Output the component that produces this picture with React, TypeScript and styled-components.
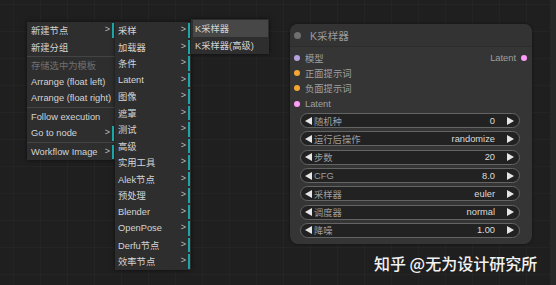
import * as React from 'react';
import styled, {createGlobalStyle} from 'styled-components';

const GlobalStyle = createGlobalStyle`
  html, body {
    margin: 0;
    padding: 0;
    background: #202020;
  }
  body {
    font-family: "Liberation Sans", "Noto Sans CJK SC", sans-serif;
  }
`;

const Canvas = styled.div`
  position: relative;
  width: 556px;
  height: 285px;
  overflow: hidden;
  box-sizing: border-box;
  border-right: 6px solid #282828;
  background-color: #1f1f1f;
  background-image:
    linear-gradient(rgba(255,255,255,.025) 1px, transparent 1px),
    linear-gradient(90deg, rgba(255,255,255,.025) 1px, transparent 1px);
  background-size: 27px 27px;
  background-position: 13px 4px;
`;

// context menu cascade, floats over the canvas
const MenuStack = styled.div`
  position: absolute;
  left: 27px;
  top: 22px;
  display: flex;
  align-items: flex-start;
`;

const Menu = styled.div<{$width: number; $offset?: number}>`
  box-sizing: border-box;
  width: ${p => p.$width}px;
  margin-top: ${p => p.$offset || 0}px;
  padding: ${p => (p.$offset ? '1px 1px 1px 2px' : '0')};
  background: #2e2e2e;
  box-shadow: 0 0 4px rgba(0,0,0,.6);
  display: flex;
  flex-direction: column;
`;

const MenuItem = styled.div<{$sub?: boolean; $dim?: boolean; $active?: boolean; $pad?: number}>`
  position: relative;
  box-sizing: border-box;
  height: 16.5px;
  display: flex;
  align-items: center;
  padding-left: ${p => p.$pad ?? 4}px;
  padding-right: 10px;
  font-size: 9.3px;
  white-space: nowrap;
  color: ${p => (p.$dim ? '#707070' : '#d4d4d4')};
  background: ${p => (p.$active ? '#474747' : 'transparent')};

  ${p => p.$sub && `
    &::before {
      content: '>';
      position: absolute;
      right: 5px;
      top: 2px;
      font-size: 9px;
      color: #bdbdbd;
    }
    &::after {
      content: '';
      position: absolute;
      right: 1px;
      top: 1px;
      bottom: 1px;
      width: 2.5px;
      background: #1aa6a6;
    }
  `}
`;

const MenuSeparator = styled.div`
  height: 1px;
  margin: 0.5px 0;
  background: #444;
`;

// the KSampler node
const Node = styled.div`
  position: absolute;
  left: 290px;
  top: 24px;
  width: 242px;
  height: 220px;
  box-sizing: border-box;
  border-radius: 8px;
  background: #353535;
  box-shadow: 0 0 3px rgba(0,0,0,.5);
  display: flex;
  flex-direction: column;
`;

const NodeTitle = styled.div`
  height: 22px;
  display: flex;
  align-items: center;
  gap: 9px;
  padding-left: 4px;
  border-radius: 8px 8px 0 0;
  background: #333;
  border-bottom: 1px solid #2c2c2c;
  color: #9a9a9a;
  font-size: 10.6px;
`;

const Dot = styled.span<{$color: string; $size?: number}>`
  width: ${p => p.$size || 6}px;
  height: ${p => p.$size || 6}px;
  border-radius: 50%;
  background: ${p => p.$color};
  flex-shrink: 0;
`;

const Slots = styled.div`
  padding: 3px 5px 0 4px;
  display: flex;
  flex-direction: column;
`;

const SlotRow = styled.div`
  height: 15.3px;
  display: flex;
  align-items: center;
  gap: 5px;
  font-size: 9.3px;
  color: #a0a0a0;
`;

const SlotOutput = styled.div`
  margin-left: auto;
  display: flex;
  align-items: center;
  gap: 5px;
`;

const Widgets = styled.div`
  padding: 2px 12px 0 10px;
  display: flex;
  flex-direction: column;
  gap: 3.3px;
`;

const Widget = styled.div`
  height: 15px;
  box-sizing: border-box;
  border: 1px solid #646464;
  border-radius: 8px;
  background: #222;
  display: flex;
  align-items: center;
  padding: 0 5px 0 4px;
  font-size: 9.3px;
`;

const Arrow = styled.span<{$dir: 'left' | 'right'}>`
  width: 0;
  height: 0;
  border-top: 4.5px solid transparent;
  border-bottom: 4.5px solid transparent;
  ${p => (p.$dir === 'left'
    ? 'border-right: 7.5px solid #e6e6e6; margin-right: 2px;'
    : 'border-left: 7.5px solid #e6e6e6; margin-left: 12px;')}
`;

const WidgetLabel = styled.span`
  color: #9e9e9e;
`;

const WidgetValue = styled.span`
  margin-left: auto;
  color: #dcdcdc;
`;

const Watermark = styled.div`
  position: absolute;
  left: 374px;
  top: 251px;
  font-family: "Noto Sans CJK SC", sans-serif;
  font-size: 16px;
  font-weight: 500;
  color: #f2f2f2;
  white-space: nowrap;
`;

const categories = [
  '采样', '加载器', '条件', 'Latent', '图像', '遮罩', '测试', '高级',
  '实用工具', 'Alek节点', '预处理', 'Blender', 'OpenPose', 'Derfu节点', '效率节点',
];

const widgets = [
  ['随机种', '0'],
  ['运行后操作', 'randomize'],
  ['步数', '20'],
  ['CFG', '8.0'],
  ['采样器', 'euler'],
  ['调度器', 'normal'],
  ['降噪', '1.00'],
];

export default function App() {
  return (
    <Canvas>
      <GlobalStyle />
      <MenuStack>
        <Menu $width={88}>
          <MenuItem $sub>新建节点</MenuItem>
          <MenuItem>新建分组</MenuItem>
          <MenuSeparator />
          <MenuItem $dim>存储选中为模板</MenuItem>
          <MenuItem>Arrange (float left)</MenuItem>
          <MenuItem>Arrange (float right)</MenuItem>
          <MenuSeparator />
          <MenuItem>Follow execution</MenuItem>
          <MenuItem $sub>Go to node</MenuItem>
          <MenuSeparator />
          <MenuItem $sub>Workflow Image</MenuItem>
        </Menu>
        <Menu $width={76}>
          {categories.map(c => (
            <MenuItem key={c} $sub $pad={3}>{c}</MenuItem>
          ))}
        </Menu>
        <Menu $width={78} $offset={-3}>
          <MenuItem $active $pad={2}>K采样器</MenuItem>
          <MenuItem $pad={2}>K采样器(高级)</MenuItem>
        </Menu>
      </MenuStack>

      <Node>
        <NodeTitle>
          <Dot $color="#6f6f6f" $size={7} />
          K采样器
        </NodeTitle>
        <Slots>
          <SlotRow>
            <Dot $color="#b7a3e0" />
            模型
            <SlotOutput>
              Latent
              <Dot $color="#ff9cf9" />
            </SlotOutput>
          </SlotRow>
          <SlotRow>
            <Dot $color="#f5a534" />
            正面提示词
          </SlotRow>
          <SlotRow>
            <Dot $color="#f5a534" />
            负面提示词
          </SlotRow>
          <SlotRow>
            <Dot $color="#ff9cf9" />
            Latent
          </SlotRow>
        </Slots>
        <Widgets>
          {widgets.map(([label, value]) => (
            <Widget key={label}>
              <Arrow $dir="left" />
              <WidgetLabel>{label}</WidgetLabel>
              <WidgetValue>{value}</WidgetValue>
              <Arrow $dir="right" />
            </Widget>
          ))}
        </Widgets>
      </Node>

      <Watermark>知乎 @无为设计研究所</Watermark>
    </Canvas>
  );
}
